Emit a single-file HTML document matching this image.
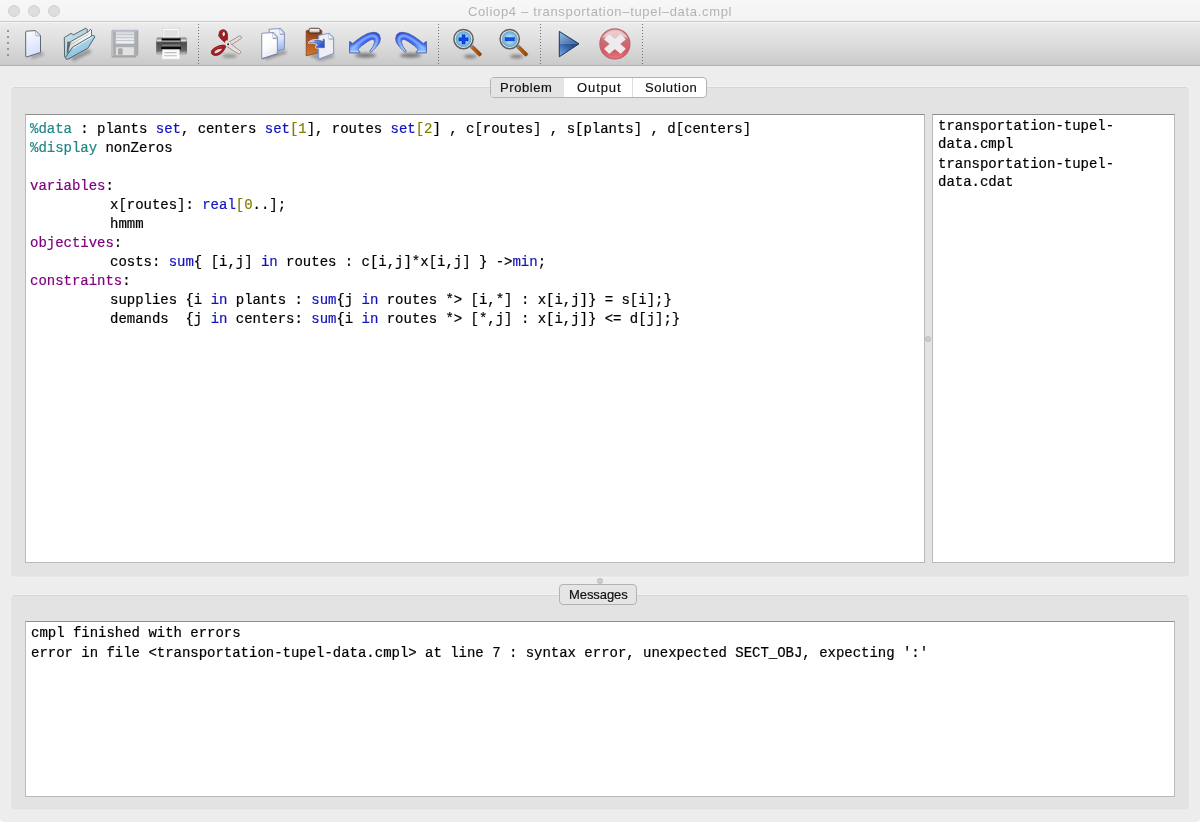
<!DOCTYPE html>
<html><head><meta charset="utf-8">
<style>
html,body{margin:0;padding:0;}
html{background:#fff;}
body{width:1200px;height:822px;overflow:hidden;background:#ededed;border-radius:4px;position:relative;font-family:"Liberation Sans",sans-serif;}
.abs{position:absolute;}
#titlebar{left:0;top:0;width:1200px;height:21px;border-radius:4px 4px 0 0;background:linear-gradient(#f7f7f7,#f3f3f3);border-bottom:1px solid #c9c9c9;}
#title{left:0;width:1200px;top:4px;text-align:center;font-size:13px;color:#b3b3b3;letter-spacing:0.68px;line-height:16px;}
.tl{width:12px;height:12px;border-radius:50%;background:#dddddd;border:0.5px solid #d2d2d2;box-sizing:border-box;top:5px;}
#toolbar{left:0;top:22px;width:1200px;height:43px;box-shadow:inset 0 1px 0 #f6f6f6;background:linear-gradient(#ececec 0%,#dddddd 50%,#cacaca 100%);border-bottom:1px solid #b2b2b2;}
.group{background:#e3e3e3;border:1px solid #e2e2e2;border-top-color:#d6d6d6;border-bottom-color:#e6e6e6;border-radius:4px;box-sizing:border-box;box-shadow:0 0 0 1px rgba(255,255,255,0.22);}
.box{background:#fff;box-sizing:border-box;border:1px solid #b9b9b9;border-top-color:#8e8e8e;}
.mono{font-family:"Liberation Mono",monospace;font-size:14px;color:#000;white-space:pre;letter-spacing:-0.017px;-webkit-text-stroke:0.2px;}
.gs{will-change:transform;}
#editor .l{height:19px;line-height:19px;}
.t{color:#208686}.p{color:#800080}.b{color:#1212bc}.o{color:#808000}
.tab{display:inline-block;width:80px;}
#tabs{left:490px;top:77px;width:217px;height:21px;box-sizing:border-box;border:1px solid #b2b2b2;border-radius:4px;background:#fff;overflow:hidden;}
#tabs div{position:absolute;top:0;height:19px;line-height:19px;font-size:13px;text-align:center;color:#111;}
#msgbtn{left:559px;top:584px;width:78px;height:21px;box-sizing:border-box;border:1px solid #b2b2b2;border-radius:4px;background:#e5e5e5;font-size:13px;line-height:19px;text-align:center;color:#111;}
.ui{font-size:13px;line-height:19px;color:#111;white-space:pre;-webkit-text-stroke:0.18px #111;}
.dot{width:6px;height:6px;border-radius:50%;background:radial-gradient(#d2d2d2,#b8b8b8);}
</style></head><body>
<div id="titlebar" class="abs"></div>
<div class="abs tl" style="left:8px"></div><div class="abs tl" style="left:28px"></div><div class="abs tl" style="left:48px"></div>
<div id="title" class="abs gs">Coliop4 – transportation–tupel–data.cmpl</div>
<div id="toolbar" class="abs"></div>
<!--ICONS_START--><svg class="abs" style="left:0;top:22px" width="1200" height="44" viewBox="0 22 1200 44">
<defs>
<filter id="bl" x="-50%" y="-100%" width="200%" height="300%"><feGaussianBlur stdDeviation="1.4"/></filter>
<filter id="bl1" x="-50%" y="-50%" width="200%" height="200%"><feGaussianBlur stdDeviation="0.9"/></filter>
<linearGradient id="gdoc" x1="0" y1="0" x2="0.3" y2="1"><stop offset="0" stop-color="#fbfcff"/><stop offset="1" stop-color="#d5e0fa"/></linearGradient>
<linearGradient id="gdocw" x1="0" y1="0" x2="0.3" y2="1"><stop offset="0" stop-color="#ffffff"/><stop offset="0.6" stop-color="#fcfcfd"/><stop offset="1" stop-color="#e9e9ee"/></linearGradient>
<linearGradient id="gdocb" x1="0" y1="0" x2="0" y2="1"><stop offset="0" stop-color="#f8faff"/><stop offset="0.4" stop-color="#dfe8fb"/><stop offset="1" stop-color="#94b2ee"/></linearGradient>
<linearGradient id="gfb" x1="0" y1="0" x2="1" y2="1"><stop offset="0" stop-color="#cfe4ee"/><stop offset="1" stop-color="#9cc2d6"/></linearGradient>
<linearGradient id="gff" x1="0" y1="0" x2="0.4" y2="1"><stop offset="0" stop-color="#c2e2f2"/><stop offset="1" stop-color="#86bede"/></linearGradient>
<linearGradient id="gpr" x1="0" y1="0" x2="0" y2="1"><stop offset="0" stop-color="#777"/><stop offset="0.14" stop-color="#c4c4c4"/><stop offset="0.3" stop-color="#4c4c4c"/><stop offset="0.8" stop-color="#686868"/><stop offset="0.3" stop-color="#6e6e6e"/><stop offset="0.8" stop-color="#7c7c7c"/><stop offset="1" stop-color="#a0a0a0"/></linearGradient>
<linearGradient id="gund" x1="0" y1="0" x2="0" y2="1"><stop offset="0" stop-color="#1c38ee"/><stop offset="0.55" stop-color="#3560f6"/><stop offset="0.85" stop-color="#7ab4ff"/><stop offset="1" stop-color="#d4e6ff"/></linearGradient>
<radialGradient id="glens" cx="0.5" cy="0.5" r="0.5"><stop offset="0" stop-color="#dcf2ff"/><stop offset="0.55" stop-color="#96d0f2"/><stop offset="1" stop-color="#5fa6d6"/></radialGradient>
<linearGradient id="ghan" x1="0" y1="0" x2="1" y2="0"><stop offset="0" stop-color="#c66a18"/><stop offset="1" stop-color="#8a4208"/></linearGradient>
<linearGradient id="gpl1" x1="0" y1="0" x2="1" y2="1"><stop offset="0" stop-color="#9cc4e6"/><stop offset="1" stop-color="#2f5a9a"/></linearGradient>
<linearGradient id="gpl2" x1="0" y1="1" x2="1" y2="0"><stop offset="0" stop-color="#7fb0ea"/><stop offset="0.6" stop-color="#3560a4"/><stop offset="1" stop-color="#1b3872"/></linearGradient>
<linearGradient id="gstop" x1="0" y1="0" x2="0" y2="1"><stop offset="0" stop-color="#dfbcc0"/><stop offset="0.4" stop-color="#c96e75"/><stop offset="0.75" stop-color="#d65a64"/><stop offset="1" stop-color="#ec7680"/></linearGradient>
<linearGradient id="gclip" x1="0.3" y1="0" x2="0.1" y2="1"><stop offset="0" stop-color="#8a3e14"/><stop offset="0.35" stop-color="#a9511e"/><stop offset="1" stop-color="#d47a30"/></linearGradient>
<linearGradient id="gclp" x1="0" y1="0" x2="0" y2="1"><stop offset="0" stop-color="#ffffff"/><stop offset="0.6" stop-color="#d8d8d8"/><stop offset="1" stop-color="#8c7c74"/></linearGradient>
<linearGradient id="gparr" x1="0" y1="0" x2="1" y2="0.6"><stop offset="0" stop-color="#e0ecff"/><stop offset="0.4" stop-color="#6b92e4"/><stop offset="1" stop-color="#2a50c6"/></linearGradient>
<linearGradient id="gfl" x1="0" y1="0" x2="0" y2="1"><stop offset="0" stop-color="#d2d6d8"/><stop offset="0.3" stop-color="#dfe5e6"/><stop offset="1" stop-color="#eef3f3"/></linearGradient>
<clipPath id="cund"><path d="M349.6 41.4 L349.6 52.9 L360.2 52.9 L357.8 49.4 Q361 46 366 42.6 Q370.4 39.4 372.6 39.2 Q374.8 39.6 374.6 42.4 Q373.6 46.4 369.8 51.3 L370.8 52.2 Q377 47.4 379.6 42.6 Q381.2 38 379.2 34.6 Q377.2 32.2 373.2 32.3 Q368 32.6 362.6 36.2 Q356.6 40 352.6 43.6Z"/></clipPath>
<linearGradient id="gpap" x1="1" y1="0" x2="0" y2="1"><stop offset="0" stop-color="#ffffff"/><stop offset="0.5" stop-color="#f2f2f0"/><stop offset="1" stop-color="#cfcfcd"/></linearGradient>
</defs>
<!-- handle -->
<g fill="#969696"><rect x="7" y="30" width="2" height="2"/><rect x="7" y="36" width="2" height="2"/><rect x="7" y="42" width="2" height="2"/><rect x="7" y="48" width="2" height="2"/><rect x="7" y="54" width="2" height="2"/></g>
<!-- separators -->
<g stroke="#666666" stroke-width="1" stroke-dasharray="1 2" opacity="0.9"><path d="M198.5 24V65"/><path d="M438.5 24V65"/><path d="M540.5 24V65"/><path d="M642.5 24V65"/></g>
<!-- new doc -->
<path d="M30 56 L42 51.5 L44.5 55 L32 59Z" fill="#555" opacity="0.4" filter="url(#bl)"/>
<path d="M25.7 31.9 Q25.7 31.3 26.5 31.2 L35.6 30.6 L40.5 35.2 L40.5 52.5 L26.7 57 Q25.7 57.2 25.7 56.2Z" fill="url(#gdoc)" stroke="#5e667c" stroke-width="1" stroke-linejoin="round"/>
<path d="M35.5 31 L35.7 35.4 L40.2 35.6 Z" fill="#eef1fb" stroke="#a4acc0" stroke-width="0.7" stroke-linejoin="round"/><path d="M36 35.9 L40.2 36.1" stroke="#9aa2b6" stroke-width="0.8" opacity="0.6"/>
<!-- open folder -->
<path d="M70 58 L88 49 L92 52 L74 61Z" fill="#444" opacity="0.45" filter="url(#bl)"/>
<path d="M64.3 37.6 L71 33.4 L73.6 34.8 L85.5 28.3 L87.2 29.2 L87.2 40 L66 57.5 L64.6 56.8Z" fill="url(#gfb)" stroke="#56666e" stroke-width="1" stroke-linejoin="round"/>
<path d="M67.4 41.4 L70.6 41.8 L67.8 52.2 L66.6 55Z" fill="#4a565c" opacity="0.85"/>
<path d="M70.4 41.8 L88.8 31.5 L90.2 29.4 L91.5 30 L91.5 38.5 L67.6 52.5Z" fill="url(#gpap)" stroke="#5c5c5c" stroke-width="0.9" stroke-linejoin="round"/>
<path d="M70.6 44.6 L89.4 33.8" stroke="#b4b4b4" stroke-width="0.7" fill="none"/>
<path d="M72.6 47.2 L92.4 35.5 Q94 34.8 94.9 36.8 L87.8 48.2 L67.6 59.4 Q66 59.8 65.4 57.6 Z" fill="url(#gff)" stroke="#4e626c" stroke-width="1" stroke-linejoin="round"/>
<path d="M73 48.2 L92.6 36.6" stroke="#e8f6fc" stroke-width="0.9" fill="none"/>
<!-- floppy (disabled) -->
<path d="M112 30.3 H137.8 V54.5 L135.3 57 H112Z" fill="#adadb0" stroke="#9b9b9f" stroke-width="0.8"/>
<path d="M112.5 30.8 H137.3" stroke="#c9c4de" stroke-width="1"/>
<path d="M112.6 31 V56.5" stroke="#c2c2ca" stroke-width="1"/>
<rect x="115.8" y="31.6" width="18.4" height="12" fill="url(#gfl)"/>
<g stroke="#bcc2c4" stroke-width="0.9"><path d="M115.8 34.6H134.2"/><path d="M115.8 37.6H134.2"/><path d="M115.8 40.6H134.2"/></g>
<rect x="115.8" y="46.9" width="18.4" height="8.4" fill="#e2e2e2" stroke="#a9a9b0" stroke-width="0.6"/>
<rect x="118" y="48.2" width="4.7" height="6.5" rx="1" fill="#a9a9a9"/>
<!-- printer -->
<rect x="162.3" y="28.3" width="17.4" height="10" fill="#fdfdfd" stroke="#cfcfcf" stroke-width="0.7"/>
<rect x="163.6" y="30" width="14.8" height="6.6" fill="#e1e1e1"/>
<rect x="156.2" y="37.6" width="30.8" height="17" rx="1.6" fill="url(#gpr)"/>
<rect x="161.6" y="38.6" width="19" height="12" fill="#4e4e4e"/>
<rect x="161.8" y="38.5" width="18.6" height="1.6" fill="#050505"/>
<rect x="162" y="40.6" width="18.2" height="1.6" fill="#9a9a9a"/>
<rect x="162" y="42.6" width="18.2" height="1" fill="#3a3a3a"/>
<rect x="162" y="44.4" width="18.2" height="1.6" fill="#777"/>
<rect x="161.2" y="47" width="19.8" height="2.2" fill="#0a0a0a"/>
<rect x="157" y="40" width="4.6" height="1.4" fill="#e8e8e8" opacity="0.8"/><rect x="181" y="40" width="5" height="1.4" fill="#e8e8e8" opacity="0.8"/>
<rect x="157" y="52.6" width="4.4" height="1" fill="#d0d0d0" opacity="0.8"/><rect x="181" y="52.6" width="5" height="1" fill="#d0d0d0" opacity="0.8"/>
<path d="M162.4 49.6 H179.4 L180.2 59.4 H161.6Z" fill="#fbfbfb" stroke="#c4c4c4" stroke-width="0.6"/>
<g stroke="#bdbdbd" stroke-width="1.1"><path d="M164.4 52.6H176.6"/><path d="M164 55.8H176.8"/></g>
<!-- scissors -->
<ellipse cx="229.6" cy="56" rx="7.5" ry="2.1" fill="#444" opacity="0.42" filter="url(#bl)"/>
<path d="M228.2 42.6 L239.4 36 Q241.6 35.8 241.6 37.6 Q241.8 38.4 240.8 38.8 L230.6 45.2Z" fill="#efe6e6" stroke="#8a7e7e" stroke-width="0.8" stroke-linejoin="round"/>
<path d="M229.6 43.4 L240.4 37.4" stroke="#e8b8b8" stroke-width="0.6" fill="none"/>
<path d="M230 43.2 L240.7 51.5 Q241.2 53.2 240 53.6 Q239 54 238.2 53.6 L226.4 46.2Z" fill="#f0e8e8" stroke="#8a7e7e" stroke-width="0.8" stroke-linejoin="round"/>
<path d="M229.4 45.4 L239.6 52.4" stroke="#e8c0c0" stroke-width="0.6" fill="none"/>
<path d="M224.8 42.4 Q221.6 39.6 220.4 38 Q218.8 36.4 218.5 35.2 Q219.2 34.4 219.2 33.4 Q219 31.6 220.6 30.4 Q222.8 29.2 224.8 30 Q227 31 227.4 34.2 Q227.7 37.4 227.3 40 L226.6 42.2 Z M223 32.6 Q222.2 33.8 222.4 35.6 Q223 37.2 224 36.8 Q225 36.4 225 34.4 Q225 32.8 224.4 32.2 Q223.6 31.8 223 32.6Z" fill="#a31a1e" fill-rule="evenodd" stroke="#72161a" stroke-width="0.8" stroke-linejoin="round"/>
<path d="M223 32.6 Q222.4 33.6 222.5 35 L224.9 35 Q225 33 224.4 32.2 Q223.6 31.8 223 32.6Z" fill="#f0e0e0"/>
<path d="M221 31.6 Q223 30.2 225 31.2" stroke="#c84048" stroke-width="0.7" fill="none" opacity="0.8"/>
<path d="M224.6 42.2 L226.8 40 L229 42 L227.6 44.6 Z" fill="#f3eded"/>
<path d="M226 45.9 Q224.6 45 222.6 45.1 Q219.6 45.4 216.6 46.8 Q213.4 48.2 211.8 50.4 Q210.8 52.4 211.8 54 Q213.4 55.6 216.4 55.5 Q219.4 55 221.6 53 Q223.6 51 224.6 49 Z M214.4 52.4 Q214.6 51 217.6 49.6 Q220.6 48.4 221.8 48.7 Q222.2 49.4 220.6 50.8 Q218.4 52.6 216 53.2 Q214.4 53.4 214.4 52.4Z" fill="#a81c20" fill-rule="evenodd" stroke="#72161a" stroke-width="0.8" stroke-linejoin="round"/>
<path d="M214.4 52.4 Q214.6 51 217.6 49.6 Q220.6 48.4 221.8 48.7 Q222.2 49.4 220.6 50.8 Q218.4 52.6 216 53.2 Q214.4 53.4 214.4 52.4Z" fill="#eed8d8"/>
<path d="M213 50.6 Q216 47.6 221.6 46.4" stroke="#cc444c" stroke-width="0.7" fill="none" opacity="0.8"/>
<circle cx="228" cy="44.2" r="2.5" fill="#f1f1f1" stroke="#b4acac" stroke-width="0.4"/>
<circle cx="228.1" cy="44.3" r="0.95" fill="#111"/>
<!-- copy -->
<path d="M264 56 L279 51.5 L285.5 50.5 L287 53 L266 60Z" fill="#444" opacity="0.45" filter="url(#bl)"/>
<path d="M269.2 29.2 L280.4 28.5 L284.4 32.8 L284.4 49.2 L277.6 50.9 L269.2 45Z" fill="url(#gdocb)" stroke="#8796b8" stroke-width="1.1" stroke-linejoin="round"/>
<path d="M279.6 29 L279.8 33.6 L284 33.8Z" fill="#f4f7ff" stroke="#aab4cc" stroke-width="0.6"/><path d="M279.8 34.3 L283.6 34.5" stroke="#70788c" stroke-width="0.9" opacity="0.7"/>
<path d="M261.7 34 Q261.7 33.3 262.5 33.2 L273.4 32.5 L277.4 37 L277.4 54 L262.8 58.8 Q261.7 59 261.7 58Z" fill="url(#gdocw)" stroke="#8796b8" stroke-width="1.1" stroke-linejoin="round"/>
<path d="M262.2 58.6 L277.2 53.8" stroke="#6a7898" stroke-width="0.9" fill="none"/>
<path d="M272.6 33 L272.8 37.7 L277 37.9Z" fill="#fbfbfd" stroke="#a6aec4" stroke-width="0.6"/><path d="M272.8 38.5 L276.8 38.7" stroke="#70788c" stroke-width="1" opacity="0.7"/>
<!-- paste -->
<path d="M308 55 L318 53 L333 54.5 L334.5 57 L320 61Z" fill="#444" opacity="0.4" filter="url(#bl)"/>
<path d="M306.2 31.2 Q306.2 30.5 307 30.5 L321 30 Q321.8 30 321.8 30.8 L321.8 52 L306.2 55.8Z" fill="url(#gclip)" stroke="#7a3a14" stroke-width="0.7"/>
<rect x="309" y="28.3" width="11" height="4.8" rx="1.5" fill="url(#gclp)" stroke="#4c2c1c" stroke-width="0.9"/>
<path d="M318.6 36.2 Q318.6 35.5 319.4 35.3 L329 33.3 L333.6 37.9 L333.6 53.5 L319.6 58.8 Q318.6 59 318.6 58Z" fill="#efeff3" stroke="#809cd2" stroke-width="1.1" stroke-linejoin="round"/>
<path d="M328.4 33.8 L328.6 38.4 L333.2 38.6Z" fill="#ffffff" stroke="#b0b8cc" stroke-width="0.6"/><path d="M328.8 39.1 L332.8 39.3" stroke="#70788c" stroke-width="0.9" opacity="0.6"/>
<path d="M309 42.6 Q312 39.6 317 40 Q321 40.4 323 41.6 L323.2 39 L324.4 39.4 L324.4 47.8 L316.4 47.6 L316.2 46.4 L318.4 45.6 Q316.6 42.6 312.4 42.2 Q310.4 42.2 309 42.6Z" fill="none" stroke="#ffffff" stroke-width="2" stroke-linejoin="round" opacity="0.9"/><path d="M309 42.6 Q312 39.6 317 40 Q321 40.4 323 41.6 L323.2 39 L324.4 39.4 L324.4 47.8 L316.4 47.6 L316.2 46.4 L318.4 45.6 Q316.6 42.6 312.4 42.2 Q310.4 42.2 309 42.6Z" fill="url(#gparr)" stroke="#3a50a0" stroke-width="0.6" stroke-linejoin="round"/>
<path d="M309 42.6 Q311 40.4 314 40.2 L314.6 41.2 Q311 41.6 309 42.6Z" fill="#ffffff" opacity="0.9"/>
<!-- undo -->
<ellipse cx="365.5" cy="55.4" rx="10.5" ry="2.3" fill="#333" opacity="0.55" filter="url(#bl)"/>
<path id="undo" d="M349.6 41.4 L349.6 52.9 L360.2 52.9 L357.8 49.4 Q361 46 366 42.6 Q370.4 39.4 372.6 39.2 Q374.8 39.6 374.6 42.4 Q373.6 46.4 369.8 51.3 L370.8 52.2 Q377 47.4 379.6 42.6 Q381.2 38 379.2 34.6 Q377.2 32.2 373.2 32.3 Q368 32.6 362.6 36.2 Q356.6 40 352.6 43.6Z" fill="url(#gund)" stroke="#4e64a8" stroke-width="1" stroke-linejoin="round"/>
<path d="M352 49 Q357 44 363.6 39.4 Q369.4 35.6 373 35.6 Q376.6 35.8 377.2 39.4 Q377 43.6 371.4 51" fill="none" stroke="#b4dcff" stroke-width="2.2" opacity="0.9" filter="url(#bl1)" clip-path="url(#cund)"/>
<!-- redo -->
<ellipse cx="410.5" cy="55.4" rx="10.5" ry="2.3" fill="#333" opacity="0.55" filter="url(#bl)"/>
<g transform="translate(776 0) scale(-1 1)">
<path d="M349.6 41.4 L349.6 52.9 L360.2 52.9 L357.8 49.4 Q361 46 366 42.6 Q370.4 39.4 372.6 39.2 Q374.8 39.6 374.6 42.4 Q373.6 46.4 369.8 51.3 L370.8 52.2 Q377 47.4 379.6 42.6 Q381.2 38 379.2 34.6 Q377.2 32.2 373.2 32.3 Q368 32.6 362.6 36.2 Q356.6 40 352.6 43.6Z" fill="url(#gund)" stroke="#4e64a8" stroke-width="1" stroke-linejoin="round"/>
<path d="M352 49 Q357 44 363.6 39.4 Q369.4 35.6 373 35.6 Q376.6 35.8 377.2 39.4 Q377 43.6 371.4 51" fill="none" stroke="#b4dcff" stroke-width="2.2" opacity="0.9" filter="url(#bl1)" clip-path="url(#cund)"/>
</g>
<!-- zoom in -->
<g id="mag">
<ellipse cx="470.4" cy="56.4" rx="6.5" ry="2" fill="#333" opacity="0.5" filter="url(#bl)"/>
<path d="M470.6 47.8 L473.2 45.6 L481.4 53.4 Q482 54.6 480.8 55.6 Q479.6 56.6 478.6 55.8Z" fill="url(#ghan)" stroke="#7a4a20" stroke-width="0.5"/>
<path d="M469.6 46.8 L472.2 44.6 L473.6 46 L471 48.2Z" fill="#8a8a86"/>
<circle cx="463.5" cy="39.1" r="9.6" fill="#f2f2f2" stroke="#5e5e5e" stroke-width="1.5"/>
<circle cx="463.5" cy="39.1" r="7.7" fill="url(#glens)" stroke="#5f8cae" stroke-width="0.5"/>
</g>
<path d="M458.9 37.7 H462 V34.8 H465.1 V37.7 H468.1 V40.9 H465.1 V43.9 H462 V40.9 H458.9Z" fill="#0f47e6" stroke="#0a2a9a" stroke-width="0.5"/>
<!-- zoom out -->
<g transform="translate(46.2 0)">
<ellipse cx="470.4" cy="56.4" rx="6.5" ry="2" fill="#333" opacity="0.5" filter="url(#bl)"/>
<path d="M470.6 47.8 L473.2 45.6 L481.4 53.4 Q482 54.6 480.8 55.6 Q479.6 56.6 478.6 55.8Z" fill="url(#ghan)" stroke="#7a4a20" stroke-width="0.5"/>
<path d="M469.6 46.8 L472.2 44.6 L473.6 46 L471 48.2Z" fill="#8a8a86"/>
<circle cx="463.5" cy="39.1" r="9.6" fill="#f2f2f2" stroke="#5e5e5e" stroke-width="1.5"/>
<circle cx="463.5" cy="39.1" r="7.7" fill="url(#glens)" stroke="#5f8cae" stroke-width="0.5"/>
<rect x="458.9" y="37.7" width="9.2" height="3.2" fill="#1450e0" stroke="#0a2a9a" stroke-width="0.5"/>
</g>
<!-- play -->
<path d="M559.3 31.4 L579 43.8 L559.3 43.8Z" fill="url(#gpl1)"/>
<path d="M559.3 43.8 L579 43.8 L559.3 56.8Z" fill="url(#gpl2)"/>
<path d="M559.3 31.4 L579 43.8 L559.3 56.8Z" fill="none" stroke="#1b3260" stroke-width="1" stroke-linejoin="round"/>
<!-- stop -->
<circle cx="614.9" cy="43.9" r="15" fill="url(#gstop)" stroke="#c0626a" stroke-width="1.2"/>
<path d="M601.5 38 Q607 31 614.9 30.6 Q623 31 628.3 38 Q622 35.5 614.9 40 Q608 35.5 601.5 38Z" fill="#f1dcde" opacity="0.7"/>
<path d="M605.3 39.2 L609.2 35.3 L614.9 40.1 L620.6 35.3 L624.5 39.2 L618.8 44.0 L624.5 48.8 L620.6 52.7 L614.9 47.9 L609.2 52.7 L605.3 48.8 L611.0 44.0Z" fill="#ececec" stroke="#ececec" stroke-width="1.8" stroke-linejoin="round"/>

</svg>
<!--ICONS_END-->

<div class="abs group" style="left:11px;top:87px;width:1178px;height:490px;"></div>
<div id="tabs" class="abs"><div style="left:0;width:73px;background:#e4e4e4;"></div><div style="left:73px;width:68px;border-right:1px solid #dedede;"></div></div>
<div class="abs gs ui" style="left:500px;top:78px;letter-spacing:0.58px;">Problem</div><div class="abs gs ui" style="left:576.5px;top:78px;letter-spacing:0.9px;">Output</div><div class="abs gs ui" style="left:644.5px;top:78px;letter-spacing:0.69px;">Solution</div>
<div id="editor" class="abs box mono" style="left:25px;top:114px;width:900px;height:449px;padding:5px 0 0 4px;"><div class="gs"><div class="l"><span class="t">%data</span> : plants <span class="b">set</span>, centers <span class="b">set</span><span class="o">[1</span>], routes <span class="b">set</span><span class="o">[2</span>] , c[routes] , s[plants] , d[centers]</div><div class="l"><span class="t">%display</span> nonZeros</div><div class="l"> </div><div class="l"><span class="p">variables</span>:</div><div class="l"><span class="tab"></span>x[routes]: <span class="b">real</span><span class="o">[0</span>..];</div><div class="l"><span class="tab"></span>hmmm</div><div class="l"><span class="p">objectives</span>:</div><div class="l"><span class="tab"></span>costs: <span class="b">sum</span>{ [i,j] <span class="b">in</span> routes : c[i,j]*x[i,j] } -><span class="b">min</span>;</div><div class="l"><span class="p">constraints</span>:</div><div class="l"><span class="tab"></span>supplies {i <span class="b">in</span> plants : <span class="b">sum</span>{j <span class="b">in</span> routes *> [i,*] : x[i,j]} = s[i];}</div><div class="l"><span class="tab"></span>demands  {j <span class="b">in</span> centers: <span class="b">sum</span>{i <span class="b">in</span> routes *> [*,j] : x[i,j]} &lt;= d[j];}</div></div></div>
<div id="flist" class="abs box mono" style="left:932px;top:114px;width:243px;height:449px;padding:2px 0 0 5px;line-height:18px;"><div class="gs" style="position:relative;top:-0.5px"><div>transportation-tupel-
data.cmpl</div><div style="margin-top:2px">transportation-tupel-
data.cdat</div></div></div>
<div class="abs dot" style="left:925px;top:336px;"></div>
<div class="abs dot" style="left:597px;top:578px;"></div>

<div class="abs group" style="left:11px;top:595px;width:1178px;height:215px;"></div>
<div id="msgbtn" class="abs"></div><div class="abs gs ui" style="left:568.5px;top:585px;letter-spacing:-0.08px;">Messages</div>
<div id="msgs" class="abs box mono" style="left:25px;top:621px;width:1150px;height:176px;padding:0 0 0 5px;line-height:20px;"><div class="gs" style="position:relative;top:0.5px">cmpl finished with errors
error in file &lt;transportation-tupel-data.cmpl&gt; at line 7 : syntax error, unexpected SECT_OBJ, expecting ':'</div></div>
</body></html>
